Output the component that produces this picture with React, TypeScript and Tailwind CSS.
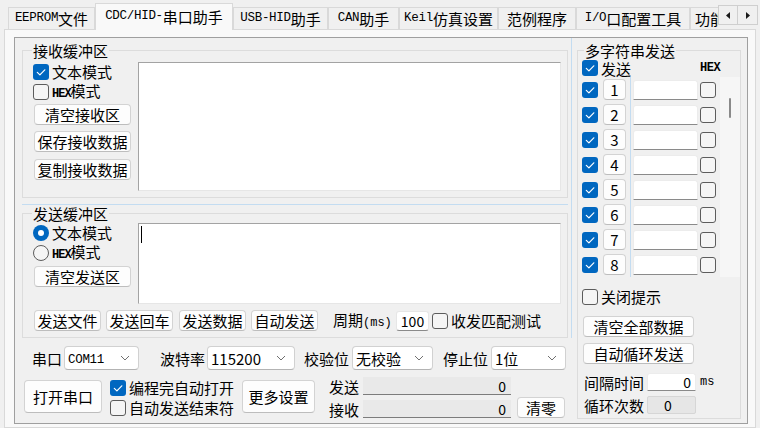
import React from 'react';

const CN = "font-['Noto_Sans_CJK_SC',sans-serif]";
const MONO = "font-['Liberation_Mono','Noto_Sans_CJK_SC',monospace]";

// split ascii runs so latin can use the narrow mono face like the original UI
function Mixed({ text, latin }: { text: string; latin: string }) {
  const parts = text.split(/([\x20-\x7e]+)/).filter(Boolean);
  return (
    <>
      {parts.map((p, i) =>
        /^[\x20-\x7e]+$/.test(p) ? (
          <span key={i} className={latin}>
            {p}
          </span>
        ) : (
          <span key={i}>{p}</span>
        )
      )}
    </>
  );
}

function Box({ checked }: { checked?: boolean }) {
  return checked ? (
    <span className="flex h-[16px] w-[16px] shrink-0 items-center justify-center rounded-[3px] bg-[#0067c0]">
      <svg viewBox="0 0 16 16" className="h-[16px] w-[16px]">
        <path d="M4.3 8.3 L6.9 10.9 L11.8 5.8" fill="none" stroke="white" strokeWidth="1.2" strokeLinecap="round" strokeLinejoin="round" />
      </svg>
    </span>
  ) : (
    <span className="block h-[16px] w-[16px] shrink-0 rounded-[3px] border border-[#5c5c5c] bg-[#f5f5f5]" />
  );
}

function Radio({ checked }: { checked?: boolean }) {
  return checked ? (
    <span className="flex h-[16px] w-[16px] shrink-0 items-center justify-center rounded-full bg-[#0067c0]">
      <span className="h-[6px] w-[6px] rounded-full bg-white" />
    </span>
  ) : (
    <span className="block h-[16px] w-[16px] shrink-0 rounded-full border border-[#5c5c5c] bg-[#f5f5f5]" />
  );
}

function Check({ checked, children, className = '' }: { checked?: boolean; children: React.ReactNode; className?: string }) {
  return (
    <div className={`flex items-center gap-[3px] text-[15px] leading-[18px] ${className}`}>
      <Box checked={checked} />
      <span className="whitespace-nowrap">{children}</span>
    </div>
  );
}

function Option({ checked, children, className = '' }: { checked?: boolean; children: React.ReactNode; className?: string }) {
  return (
    <div className={`flex items-center gap-[3px] text-[15px] leading-[18px] ${className}`}>
      <Radio checked={checked} />
      <span className="whitespace-nowrap">{children}</span>
    </div>
  );
}

function Hex() {
  return <span className={`${MONO} text-[12px] font-bold tracking-[-1px]`}>HEX</span>;
}

function Btn({ className = '', children }: { className?: string; children: React.ReactNode }) {
  return (
    <div className={`flex shrink-0 items-center justify-center whitespace-nowrap rounded-[4px] border border-[#d3d3d3] border-b-[#bdbdbd] bg-[#fdfdfd] text-[15px] leading-none ${className}`}>
      {children}
    </div>
  );
}

function Chevron() {
  return (
    <svg viewBox="0 0 10 6" className="h-[6px] w-[10px]">
      <path d="M1 1 L5 5 L9 1" fill="none" stroke="#707070" strokeWidth="1" />
    </svg>
  );
}

function Select({ className = '', children }: { className?: string; children: React.ReactNode }) {
  return (
    <div className={`flex h-[24px] shrink-0 items-center justify-between rounded-[4px] border border-[#d1d1d1] border-b-[#b3b3b3] bg-white pl-[3px] pr-[8px] text-[15px] leading-none ${className}`}>
      <span className="whitespace-nowrap">{children}</span>
      <Chevron />
    </div>
  );
}

const tabs = [
  { t: 'EEPROM文件', w: 'w-[87px]' },
  { t: 'CDC/HID-串口助手', w: 'w-[138px]', sel: true },
  { t: 'USB-HID助手', w: 'w-[95px]' },
  { t: 'CAN助手', w: 'w-[71px]' },
  { t: 'Keil仿真设置', w: 'w-[99px]' },
  { t: '范例程序', w: 'w-[78px]' },
  { t: 'I/O口配置工具', w: 'w-[114px]' },
];

function TabStrip() {
  return (
    <div className="relative z-10 flex h-[29px] items-end pl-[8px]">
      {tabs.map((tab) => (
        <div
          key={tab.t}
          className={`flex shrink-0 items-center justify-center whitespace-nowrap border border-b-0 border-[#d9d9d9] text-[15px] leading-none ${tab.w} ${
            tab.sel ? 'mb-[-1px] h-[27px] bg-[#f9f9f9] pb-[2px]' : 'h-[22px] bg-[#f0f0f0]'
          }`}
        >
          <Mixed text={tab.t} latin={`${MONO} text-[12.5px] tracking-[-0.3px]`} />
        </div>
      ))}
      <div className="flex h-[22px] w-[28px] shrink-0 items-center overflow-hidden whitespace-nowrap border-l border-t border-[#d9d9d9] bg-[#f0f0f0] pl-[4px] text-[15px] leading-none">
        功能
      </div>
      <div className="absolute left-[718px] top-[5px] flex">
        <div className="flex h-[20px] w-[20px] items-center justify-center border border-[#cfcfcf] bg-[#f0f0f0]">
          <svg viewBox="0 0 4 7" className="h-[7px] w-[4px]">
            <polygon points="4,0 0,3.5 4,7" fill="#1a1a1a" />
          </svg>
        </div>
        <div className="flex h-[20px] w-[20px] items-center justify-center border border-l-0 border-[#cfcfcf] bg-[#f0f0f0]">
          <svg viewBox="0 0 4 7" className="h-[7px] w-[4px]">
            <polygon points="0,0 4,3.5 0,7" fill="#1a1a1a" />
          </svg>
        </div>
      </div>
    </div>
  );
}

function TextArea({ className = '', caret }: { className?: string; caret?: boolean }) {
  return (
    <div className={`border border-[#e6e6e6] border-l-[#a3a3a3] border-t-[#a3a3a3] bg-white ${className}`}>
      {caret && <div className="ml-[2px] mt-[2px] h-[17px] w-px bg-black" />}
    </div>
  );
}

function LeftColumn() {
  return (
    <div className="flex w-[557px] shrink-0 flex-col">
      <div className="flex h-[300px] flex-col border-r border-[#c3dcf1] pl-[7px] pr-[3px]">
        <fieldset className="mt-[4px] h-[156px] border border-[#dcdcdc]">
          <legend className="ml-[9px] px-[1px] text-[15px] leading-[17px]">接收缓冲区</legend>
          <div className="flex pl-[10px] pr-[6px] pt-[3px]">
            <div className="flex w-[98px] shrink-0 flex-col">
              <Check checked className="h-[20px]">文本模式</Check>
              <Check className="h-[20px]">
                <Hex />模式
              </Check>
              <Btn className="ml-px mt-[2px] h-[21px] w-[97px]">清空接收区</Btn>
              <Btn className="ml-px mt-[6px] h-[21px] w-[97px]">保存接收数据</Btn>
              <Btn className="ml-px mt-[7px] h-[21px] w-[97px]">复制接收数据</Btn>
            </div>
            <TextArea className="ml-[7px] h-[129px] flex-1" />
          </div>
        </fieldset>
        <div className="mt-[6px] h-px bg-[#c3dcf1]" />
        <fieldset className="h-[133px] border border-[#dcdcdc]">
          <legend className="ml-[9px] px-[1px] text-[15px] leading-[17px]">发送缓冲区</legend>
          <div className="flex pl-[10px] pr-[6px] pt-[1px]">
            <div className="flex w-[98px] shrink-0 flex-col">
              <Option checked className="h-[20px]">文本模式</Option>
              <Option className="h-[20px]">
                <Hex />模式
              </Option>
              <Btn className="ml-px mt-[3px] h-[21px] w-[97px]">清空发送区</Btn>
            </div>
            <TextArea caret className="ml-[7px] h-[81px] flex-1" />
          </div>
          <div className="mt-[6px] flex items-center pl-[11px] text-[15px] leading-none">
            <Btn className="h-[21px] w-[67px]">发送文件</Btn>
            <Btn className="ml-[5px] h-[21px] w-[67px]">发送回车</Btn>
            <Btn className="ml-[6px] h-[21px] w-[67px]">发送数据</Btn>
            <Btn className="ml-[5px] h-[21px] w-[67px]">自动发送</Btn>
            <span className="ml-[15px] w-[60px] whitespace-nowrap">
              周期<span className={`${MONO} text-[12px]`}>(ms)</span>
            </span>
            <div className="ml-[3px] flex h-[20px] w-[33px] items-center justify-center rounded-[3px] border border-[#e6e6e6] border-b-[#8a8a8a] bg-white text-[14px]">
              100
            </div>
            <Check className="ml-[3px]">收发匹配测试</Check>
          </div>
        </fieldset>
      </div>

      <div className="flex flex-col text-[15px] leading-none">
        <div className="mt-[8px] flex h-[24px] items-center pl-[17px]">
          <span className="w-[32px] whitespace-nowrap">串口</span>
          <Select className="w-[75px]">
            <span className={`${MONO} text-[12.5px] tracking-[-0.3px]`}>COM11</span>
          </Select>
          <span className="ml-[21px] w-[47px] whitespace-nowrap">波特率</span>
          <Select className="w-[88px]">115200</Select>
          <span className="ml-[9px] w-[48px] whitespace-nowrap">校验位</span>
          <Select className="w-[81px]">无校验</Select>
          <span className="ml-[10px] w-[48px] whitespace-nowrap">停止位</span>
          <Select className="w-[75px]">1位</Select>
        </div>
        <div className="mt-[7px] flex items-start pl-[9px]">
          <Btn className="mt-[3px] h-[33px] w-[78px]">打开串口</Btn>
          <div className="ml-[8px] mt-[1px] flex w-[132px] shrink-0 flex-col">
            <Check checked className="h-[20px]">编程完自动打开</Check>
            <Check className="h-[20px]">自动发送结束符</Check>
          </div>
          <Btn className="mt-[3px] h-[33px] w-[73px]">更多设置</Btn>
          <div className="ml-[14px] flex flex-col">
            <div className="flex h-[18px] items-center">
              <span className="w-[34px] whitespace-nowrap">发送</span>
              <div className="flex h-[18px] w-[148px] items-center justify-end border-b border-[#7c7c7c] bg-[#e9e9e9] pr-[5px] text-[14px]">0</div>
            </div>
            <div className="mt-[5px] flex h-[18px] items-center">
              <span className="w-[34px] whitespace-nowrap">接收</span>
              <div className="flex h-[18px] w-[148px] items-center justify-end border-b border-[#7c7c7c] bg-[#e9e9e9] pr-[5px] text-[14px]">0</div>
            </div>
          </div>
          <Btn className="ml-[6px] mt-[20px] h-[21px] w-[48px]">清零</Btn>
        </div>
      </div>
    </div>
  );
}

function RightColumn() {
  const rows = [1, 2, 3, 4, 5, 6, 7, 8];
  return (
    <div className="flex w-[175px] shrink-0 flex-col pl-[5px] pr-[6px]">
      <fieldset className="mt-[4px] h-[377px] border border-[#dcdcdc]">
        <legend className="ml-[6px] px-[1px] text-[15px] leading-[17px]">多字符串发送</legend>
        <div className="flex h-[18px] items-center pl-[4px] text-[15px] leading-none">
          <Box checked />
          <span className="ml-[3px] w-[30px] whitespace-nowrap">发送</span>
          <span className={`${MONO} ml-[69px] text-[12px] font-bold tracking-[-0.5px]`}>HEX</span>
        </div>
        <div className="flex h-[200px]">
          <div className="flex w-[142px] shrink-0 flex-col">
            {rows.map((n) => (
              <div key={n} className="flex h-[25px] items-center pl-[4px]">
                <Box checked />
                <Btn className="ml-[5px] h-[21px] w-[23px] text-[14px]">{n}</Btn>
                <div className="ml-[4px] flex h-full items-center border-l border-[#c3dcf1] pl-[2px]">
                  <div className="h-[20px] w-[65px] rounded-t-[3px] border border-[#ececec] border-b-[#8a8a8a] bg-white" />
                  <span className="ml-[2px]">
                    <Box />
                  </span>
                </div>
              </div>
            ))}
          </div>
          <div className="w-[20px] bg-[#f6f6f6] pl-[9px] pt-[21px]">
            <div className="h-[20px] w-[2px] rounded-full bg-[#8a8a8a]" />
          </div>
        </div>
        <Check className="ml-[4px] mt-[11px]">关闭提示</Check>
        <Btn className="ml-[5px] mt-[10px] h-[21px] w-[111px]">清空全部数据</Btn>
        <Btn className="ml-[5px] mt-[6px] h-[21px] w-[111px]">自动循环发送</Btn>
        <div className="mt-[9px] flex h-[18px] items-center pl-[6px] text-[15px] leading-none">
          <span className="w-[63px] whitespace-nowrap">间隔时间</span>
          <div className="flex h-[18px] w-[49px] items-center justify-end rounded-t-[3px] border border-[#ececec] border-b-[#8a8a8a] bg-white pr-[4px] text-[14px]">
            0
          </div>
          <span className={`${MONO} ml-[4px] text-[12px]`}>ms</span>
        </div>
        <div className="mt-[5px] flex h-[18px] items-center pl-[6px] text-[15px] leading-none">
          <span className="w-[63px] whitespace-nowrap">循环次数</span>
          <div className="flex h-[18px] w-[49px] items-center rounded-[2px] border border-[#d6d6d6] bg-[#e6e6e6] pl-[16px] text-[14px]">0</div>
        </div>
      </fieldset>
    </div>
  );
}

export default function App() {
  return (
    <div className={`relative h-[428px] w-[760px] overflow-hidden bg-[#f0f0f0] text-black ${CN}`}>
      <TabStrip />
      <div className="mx-[4px] h-[399px] w-[752px] border border-[#d9d9d9] bg-[#f9f9f9] pb-[3px] pl-[9px] pr-[7px] pt-[7px]">
        <div className="flex h-[387px] w-[734px] border border-[#9f9f9f] bg-[#f0f0f0]">
          <LeftColumn />
          <RightColumn />
        </div>
      </div>
    </div>
  );
}
